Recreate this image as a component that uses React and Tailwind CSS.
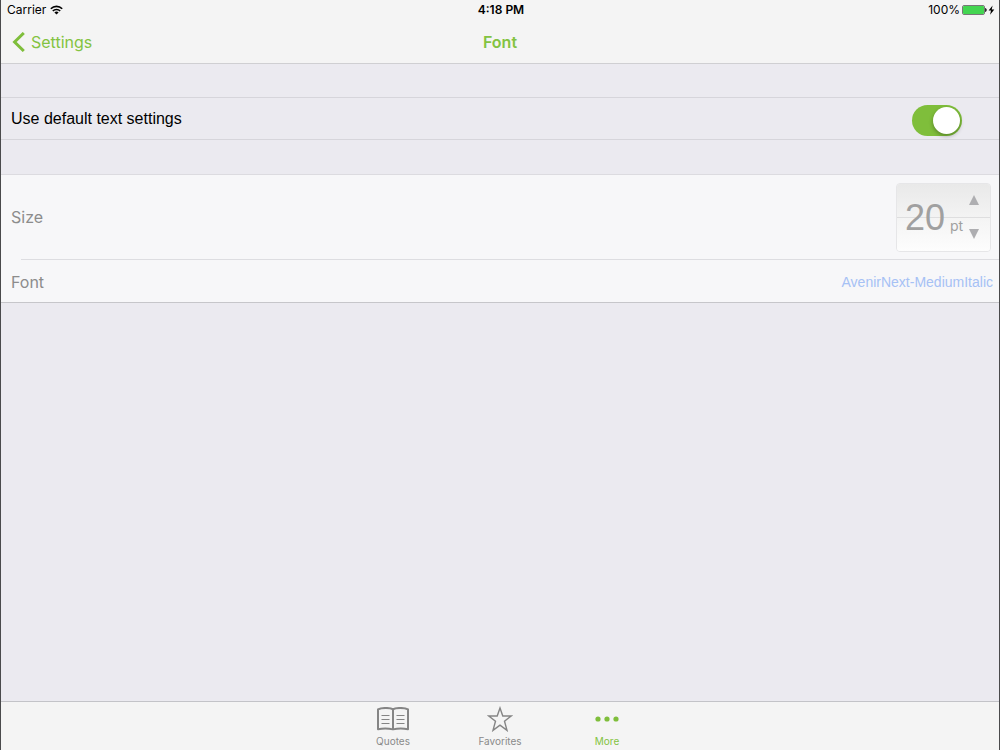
import { useState } from "react";

function WifiIcon() {
  return (
    <svg width="13" height="10" viewBox="0 0 13 10" fill="none" stroke="#000" strokeWidth="1.6">
      <path d="M0.8 3.8a8 8 0 0 1 11.4 0" />
      <path d="M2.8 6a5.2 5.2 0 0 1 7.4 0" />
      <path d="M6.5 9.6 4.4 7.5a2.9 2.9 0 0 1 4.2 0z" fill="#000" stroke="none" />
    </svg>
  );
}

function BatteryIcon() {
  return (
    <svg width="33" height="10" viewBox="0 0 33 10">
      <rect x="0.5" y="0.5" width="22" height="9" rx="1.5" fill="#f4f4f4" stroke="#777" />
      <rect x="1" y="1" width="21" height="8" rx="1" fill="#43d551" />
      <path d="M23.2 3c1.9.2 1.9 3.8 0 4z" fill="#000" />
      <path d="M30.6 0.4 26.6 5.6h2.4L28.1 9.8l4.2-5.4h-2.6z" fill="#000" />
    </svg>
  );
}

function BookIcon() {
  return (
    <svg width="32" height="24" viewBox="0 0 32 24" fill="none" stroke="#858585">
      <path
        d="M16 2.4C13.5.5 4.5.5 1 2.4V22.2C5 21.4 12 21.4 16 22.4 20 21.4 27 21.4 31 22.2V2.4C27.500.5 18.500.5 16 2.4z"
        strokeWidth="2"
        strokeLinejoin="round"
      />
      <path d="M16 2.4v20" strokeWidth="2" />
      <path
        d="M4.500 8.500h8M4.500 12.500h8M4.500 16.500h8M19.500 8.500h8M19.500 12.500h8M19.500 16.500h8"
        strokeWidth="1"
      />
    </svg>
  );
}

function StarIcon() {
  return (
    <svg width="26" height="26" viewBox="0 0 26 26" fill="none" stroke="#858585" strokeWidth="1.4">
      <path d="M13 2 15.800 10H24.200L17.500 15.200 20 24.400 13 19.200 6 24.400 8.500 15.200 1.800 10H10.200z" />
    </svg>
  );
}

function MoreIcon() {
  return (
    <svg width="24" height="6" viewBox="0 0 24 6" fill="#7fbe3b">
      <circle cx="3" cy="3" r="2.6" />
      <circle cx="12" cy="3" r="2.6" />
      <circle cx="21" cy="3" r="2.6" />
    </svg>
  );
}

const tabs = [
  { name: "Quotes", icon: BookIcon },
  { name: "Favorites", icon: StarIcon },
  { name: "More", icon: MoreIcon },
];

export default function App() {
  const [useDefault, setUseDefault] = useState(true);
  const [size, setSize] = useState(20);
  const [activeTab, setActiveTab] = useState("More");

  return (
    <div className="flex min-h-screen flex-col border-x border-[#4a4a4c] bg-[#ebeaf0] font-['Inter',sans-serif]">
      {/* Status bar + navigation */}
      <header className="border-b border-[#cfcfd2] bg-[#f4f4f4]">
        <div className="grid h-5 grid-cols-3 items-center pr-1 pl-[6px] text-xs text-black">
          <div className="flex items-center gap-1">
            <span>Carrier</span>
            <WifiIcon />
          </div>
          <span className="text-center font-semibold">4:18 PM</span>
          <div className="flex items-center justify-end gap-[2px]">
            <span>100%</span>
            <BatteryIcon />
          </div>
        </div>
        <nav className="grid h-[43px] grid-cols-3 items-center text-base text-[#83c341]">
          <a href="#settings" className="flex items-center gap-[6px] pl-[11px]">
            <svg width="13" height="20" viewBox="0 0 13 20" fill="none" stroke="#7fbe3b" strokeWidth="3">
              <path d="M11.800 1 2.600 10l9.200 9" />
            </svg>
            Settings
          </a>
          <h1 className="text-center font-semibold">Font</h1>
        </nav>
      </header>

      <main className="flex-1 pt-[33px]">
        {/* Default settings switch */}
        <div className="flex h-[43px] items-center justify-between border-y border-[#d6d5db] pr-[37px] pl-[10px]">
          <label htmlFor="use-default" className="font-['Liberation_Sans',sans-serif] text-base text-black">
            Use default text settings
          </label>
          <label className="relative mt-1 block cursor-pointer">
            <input
              id="use-default"
              type="checkbox"
              role="switch"
              checked={useDefault}
              onChange={(e) => setUseDefault(e.target.checked)}
              className="peer sr-only"
            />
            <span className="block h-[31px] w-[50px] rounded-full bg-[#d9d9dd] peer-checked:bg-[#7fbe3b]" />
            <span className="absolute top-[2px] left-[2px] size-[27px] rounded-full bg-white shadow-[0_2px_4px_rgba(0,0,0,0.3)] peer-checked:left-[21px]" />
          </label>
        </div>

        {/* Custom text settings */}
        <div className="mt-[34px] border-t border-b border-t-[#dcdbe0] border-b-[#c6c6ca] bg-[#f7f7f9] text-base text-[#8c8c8c]">
          <div className="flex h-[84px] items-center justify-between pr-2 pl-[10px]">
            <span>Size</span>
            <div className="relative flex h-[69px] w-[95px] flex-col overflow-hidden rounded-[4px] border border-[#e6e6e8]">
              <button
                type="button"
                aria-label="Increase size"
                onClick={() => setSize(size + 1)}
                className="flex flex-1 items-center justify-end border-b border-[#dededf] bg-linear-to-b from-[#e9e9e9] to-[#f3f3f3] pr-[11px]"
              >
                <svg width="10" height="10" viewBox="0 0 10 10" fill="#aeaeb1">
                  <path d="M5 0 10 10H0z" />
                </svg>
              </button>
              <button
                type="button"
                aria-label="Decrease size"
                onClick={() => setSize(size - 1)}
                className="flex flex-1 items-center justify-end bg-linear-to-b from-[#f4f4f4] to-[#fdfdfd] pr-[11px]"
              >
                <svg width="10" height="10" viewBox="0 0 10 10" fill="#aeaeb1">
                  <path d="M0 0H10L5 10z" />
                </svg>
              </button>
              <div className="pointer-events-none absolute inset-y-0 left-2 flex items-center gap-[5px] text-[#a0a0a0]">
                <span className="pt-[2px] font-['Liberation_Sans',sans-serif] text-4xl">{size}</span>
                <span className="pt-[18px] text-sm">pt</span>
              </div>
            </div>
          </div>
          <div className="ml-5 border-t border-[#dddde1]" />
          <div className="flex h-[42px] items-center justify-between pt-[2px] pr-[6px] pl-[10px]">
            <span>Font</span>
            <a href="#font" className="font-['Liberation_Sans',sans-serif] text-sm text-[#a6c1f5]">
              AvenirNext-MediumItalic
            </a>
          </div>
        </div>
      </main>

      {/* Tab bar */}
      <nav className="flex h-[49px] justify-center gap-[31px] border-t border-[#c3c3c8] bg-[#f4f4f4]">
        {tabs.map(({ name, icon: Icon }) => (
          <button
            key={name}
            type="button"
            onClick={() => setActiveTab(name)}
            className={`flex w-[76px] flex-col items-center pt-1 text-[10px] leading-3 ${
              activeTab === name ? "text-[#83c341]" : "text-[#8a8a8a]"
            }`}
          >
            <span className="flex h-[26px] items-center">
              <Icon />
            </span>
            <span className="mt-[3px]">{name}</span>
          </button>
        ))}
      </nav>
    </div>
  );
}
